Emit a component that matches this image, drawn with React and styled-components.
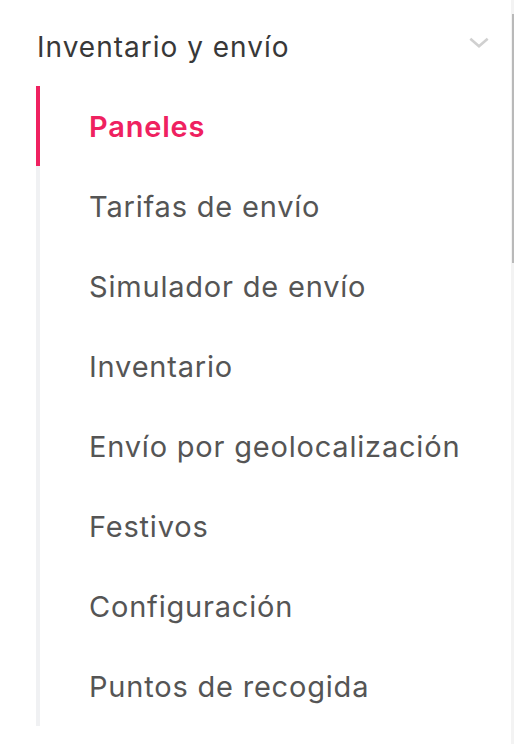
import React, { useState } from 'react';
import styled, { createGlobalStyle } from 'styled-components';

const items = [
  'Paneles',
  'Tarifas de envío',
  'Simulador de envío',
  'Inventario',
  'Envío por geolocalización',
  'Festivos',
  'Configuración',
  'Puntos de recogida',
];

const GlobalStyle = createGlobalStyle`
  body {
    margin: 0;
    background: #fff;
    font-family: Inter, "Noto Sans", sans-serif;
  }
`;

const Panel = styled.div`
  position: relative;
  width: 514px;
  height: 744px;
  overflow: hidden;
  background: #fff;
`;

const Header = styled.div`
  display: flex;
  align-items: center;
  justify-content: space-between;
  height: 86px;
  padding: 7px 22px 0 37px;
  box-sizing: border-box;
`;

const Title = styled.h2`
  margin: 0;
  font-size: 28px;
  font-weight: 400;
  letter-spacing: 1px;
  color: #383838;
`;

const Chevron = styled.svg`
  width: 26px;
  height: 26px;
  color: #d0d0d0;
  margin-bottom: 10px;
`;

const List = styled.ul`
  list-style: none;
  margin: 0 0 0 36px;
  padding: 0;
`;

const Item = styled.li`
  display: flex;
  align-items: center;
  height: 80px;
  padding-left: 49px;
  border-left: 4px solid ${({ $active }) => ($active ? '#ef2160' : '#f0f1f3')};
  font-size: 29px;
  letter-spacing: 0.8px;
  font-weight: ${({ $active }) => ($active ? 600 : 400)};
  color: ${({ $active }) => ($active ? '#ef2160' : '#555')};
  cursor: pointer;
`;

const Scrollbar = styled.div`
  position: absolute;
  top: 0;
  right: 0;
  width: 3px;
  height: 100%;
  background: #f3f3f3;
`;

const Thumb = styled.div`
  position: absolute;
  top: 14px;
  right: 0;
  width: 2px;
  height: 249px;
  background: #b9b9b9;
`;

export default function App() {
  const [active, setActive] = useState(0);

  return (
    <Panel>
      <GlobalStyle />
      <Header>
        <Title>Inventario y envío</Title>
        <Chevron viewBox="0 0 24 24" fill="none" stroke="currentColor" strokeWidth="2.4">
          <path d="M4 9l8 7 8-7" />
        </Chevron>
      </Header>
      <List>
        {items.map((label, i) => (
          <Item key={label} $active={i === active} onClick={() => setActive(i)}>
            {label}
          </Item>
        ))}
      </List>
      <Scrollbar>
        <Thumb />
      </Scrollbar>
    </Panel>
  );
}
